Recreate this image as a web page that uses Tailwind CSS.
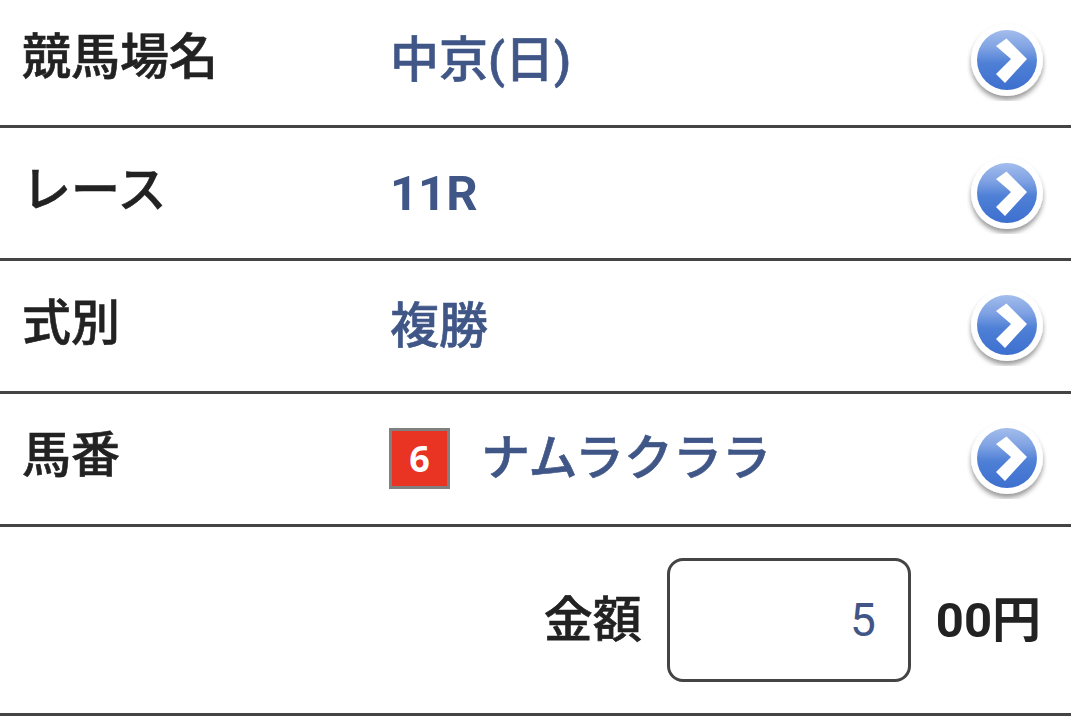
<!DOCTYPE html>
<html lang="ja">
<head>
    <meta charset="UTF-8">
    <meta name="viewport" content="width=device-width, initial-scale=1.0">
    <title>投票</title>
    <script src="https://cdn.jsdelivr.net/npm/@tailwindcss/browser@4"></script>
</head>
<body class="bg-white overflow-hidden font-['Roboto','Noto_Sans_CJK_JP',sans-serif]">

<svg width="0" height="0" class="absolute">
    <defs>
        <linearGradient id="ball" x1="0" y1="0" x2="0" y2="1">
            <stop offset="0" stop-color="#a3bdec"/>
            <stop offset="0.3" stop-color="#7fa2e3"/>
            <stop offset="0.55" stop-color="#4f80d6"/>
            <stop offset="1" stop-color="#3d6fcf"/>
        </linearGradient>
        <filter id="drop" x="-30%" y="-30%" width="160%" height="160%">
            <feDropShadow dx="0" dy="4" stdDeviation="2.5" flood-color="#000" flood-opacity="0.4"/>
        </filter>
        <symbol id="go" viewBox="0 0 80 80">
            <circle cx="40" cy="39" r="36" fill="#fff" filter="url(#drop)"/>
            <circle cx="40" cy="39" r="30" fill="url(#ball)"/>
            <path d="M29 25 L39.5 17.5 L60 38 L38 62 L29 53 L44 38 Z" fill="#fff"/>
        </symbol>
    </defs>
</svg>

<div class="w-[1071px]">
    <!-- 競馬場名 -->
    <div class="h-[128px] border-b-[3px] border-[#444] flex items-center pl-[22px] pr-[24px]">
        <div class="w-[368px] text-[49px] leading-none font-medium [-webkit-text-stroke:0.6px_#222] text-[#222] -mt-[11px]">競馬場名</div>
        <div class="flex-1 text-[49px] leading-none font-medium [-webkit-text-stroke:0.6px_#3f5687] text-[#3f5687] -mt-[5px]">中京(日)</div>
        <svg class="w-[80px] h-[80px] -mt-[4px]"><use href="#go"/></svg>
    </div>
    <!-- レース -->
    <div class="h-[133px] border-b-[3px] border-[#444] flex items-center pl-[22px] pr-[24px]">
        <div class="w-[368px] text-[49px] leading-none font-medium [-webkit-text-stroke:0.6px_#222] text-[#222] -mt-[6px]">レース</div>
        <div class="flex-1 text-[49px] leading-none font-bold text-[#3f5687]">11R</div>
        <svg class="w-[80px] h-[80px] mt-[2px]"><use href="#go"/></svg>
    </div>
    <!-- 式別 -->
    <div class="h-[133px] border-b-[3px] border-[#444] flex items-center pl-[22px] pr-[24px]">
        <div class="w-[368px] text-[49px] leading-none font-medium [-webkit-text-stroke:0.6px_#222] text-[#222] -mt-[6px]">式別</div>
        <div class="flex-1 text-[49px] leading-none font-medium [-webkit-text-stroke:0.6px_#3f5687] text-[#3f5687]">複勝</div>
        <svg class="w-[80px] h-[80px]"><use href="#go"/></svg>
    </div>
    <!-- 馬番 -->
    <div class="h-[133px] border-b-[3px] border-[#444] flex items-center pl-[22px] pr-[24px]">
        <div class="w-[367px] text-[49px] leading-none font-medium [-webkit-text-stroke:0.6px_#222] text-[#222] -mt-[7px]">馬番</div>
        <div class="flex-1 flex items-center -mt-[1px]">
            <div class="w-[61px] h-[61px] border-[3px] border-[#808080] bg-[#e93323] text-white text-[36px] font-bold flex items-center justify-center font-['Noto_Sans',sans-serif]">6</div>
            <div class="ml-[31px] text-[49px] leading-none font-medium [-webkit-text-stroke:0.6px_#3f5687] text-[#3f5687]">ナムラクララ</div>
        </div>
        <svg class="w-[80px] h-[80px] -mt-[1px]"><use href="#go"/></svg>
    </div>
    <!-- 金額 -->
    <div class="h-[189px] border-b-[3px] border-[#444] flex items-center justify-end pr-[30px]">
        <div class="text-[49px] leading-none font-medium [-webkit-text-stroke:0.6px_#222] text-[#222]">金額</div>
        <div class="w-[244px] h-[124px] ml-[25px] border-[3px] border-[#444] rounded-[16px] flex items-center justify-end pr-[32px] text-[46px] text-[#3f5687]">5</div>
        <div class="ml-[25px] text-[49px] leading-none font-bold text-[#222]">00円</div>
    </div>
</div>

</body>
</html>
